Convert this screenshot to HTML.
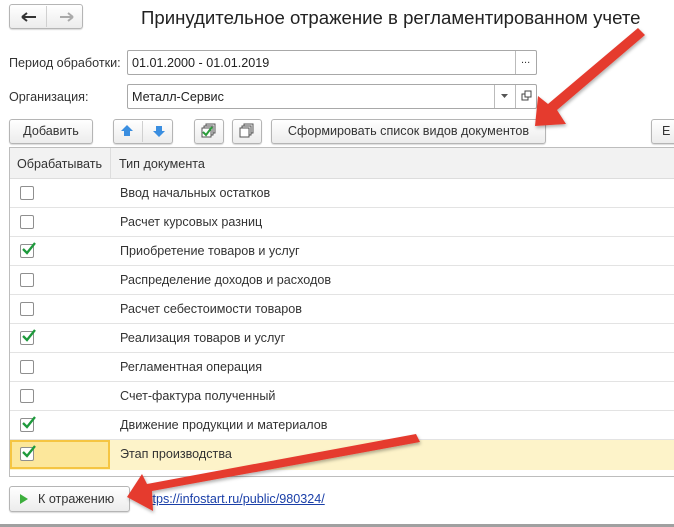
<!DOCTYPE html>
<html><head><meta charset="utf-8"><style>
body{margin:0;width:674px;height:527px;background:#fff;font-family:"Liberation Sans",Arial,sans-serif;font-size:12.6px;color:#333;position:relative;overflow:hidden}
.a{position:absolute}
.btn{position:absolute;border:1px solid #b5b5b5;border-radius:3px;background:linear-gradient(#fff,#ececec);box-shadow:0 1px 1px rgba(0,0,0,.15);box-sizing:border-box;text-align:center;color:#333}
.inp{position:absolute;border:1px solid #a8a8a8;border-radius:2px;box-sizing:border-box;background:#fff}
.row{position:absolute;left:10px;width:664px;height:29px;border-bottom:1px solid #e3e3e3;box-sizing:border-box}
.row span{position:absolute;left:110px;top:7px}
.cb{position:absolute;left:10px;top:7px;width:14px;height:14px;border:1px solid #8f8f8f;border-radius:2px;background:#fff;box-sizing:border-box}
.cb svg{position:absolute;left:0;top:-4px}
</style></head><body>
<div class="btn" style="left:9px;top:4px;width:74px;height:25px"></div>
<div class="a" style="left:46px;top:6px;width:1px;height:21px;background:#d0d0d0"></div>
<svg class="a" style="left:20px;top:10px" width="60" height="14"><path d="M2 7h14M2 7l5-4M2 7l5 4" stroke="#333" stroke-width="2" fill="none"/><path d="M40 7h13M53 7l-5-4M53 7l-5 4" stroke="#aaa" stroke-width="2" fill="none"/></svg>
<div class="a" style="left:141px;top:7px;font-size:18.6px;color:#222">Принудительное отражение в регламентированном учете</div>
<div class="a" style="left:9px;top:56px">Период обработки:</div>
<div class="inp" style="left:127px;top:50px;width:410px;height:25px"><span class="a" style="left:4px;top:5px;color:#222">01.01.2000 - 01.01.2019</span><div class="a" style="left:387px;top:0;width:1px;height:23px;background:#bbb"></div><span class="a" style="left:393px;top:3px;font-size:11px">...</span></div>
<div class="a" style="left:9px;top:90px">Организация:</div>
<div class="inp" style="left:127px;top:84px;width:410px;height:25px"><span class="a" style="left:4px;top:5px;color:#222">Металл-Сервис</span><div class="a" style="left:366px;top:0;width:1px;height:23px;background:#bbb"></div><div class="a" style="left:387px;top:0;width:1px;height:23px;background:#bbb"></div><svg class="a" style="left:373px;top:9px" width="8" height="5"><path d="M0 0h7L3.5 4z" fill="#555"/></svg><svg class="a" style="left:393px;top:5px" width="12" height="12"><rect x="1" y="4" width="6" height="6" fill="none" stroke="#444"/><rect x="4" y="1" width="6" height="6" fill="#fff" stroke="#444"/></svg></div>
<div class="btn" style="left:9px;top:119px;width:84px;height:25px;line-height:23px">Добавить</div>
<div class="btn" style="left:113px;top:119px;width:60px;height:25px"></div>
<div class="a" style="left:142px;top:121px;width:1px;height:21px;background:#d0d0d0"></div>
<svg class="a" style="left:120px;top:123px" width="50" height="16"><path d="M7 2l6 6h-3v5H4V8H1z" fill="#3a8ee0"/><path d="M36 3h6v5h3l-6 6-6-6h3z" fill="#3a8ee0"/></svg>
<div class="btn" style="left:194px;top:119px;width:30px;height:25px"></div>
<svg class="a" style="left:200px;top:122px" width="18" height="18"><rect x="6" y="2" width="9" height="9" fill="#eee" stroke="#555"/><rect x="4" y="4" width="9" height="9" fill="#eee" stroke="#555"/><rect x="2" y="6" width="9" height="9" fill="#fff" stroke="#555"/><path d="M3 10l3 3 6-8" stroke="#2a9d3a" stroke-width="2" fill="none"/></svg>
<div class="btn" style="left:232px;top:119px;width:30px;height:25px"></div>
<svg class="a" style="left:238px;top:122px" width="18" height="18"><rect x="6" y="2" width="9" height="9" fill="#eee" stroke="#555"/><rect x="4" y="4" width="9" height="9" fill="#eee" stroke="#555"/><rect x="2" y="6" width="9" height="9" fill="#fff" stroke="#555"/></svg>
<div class="btn" style="left:271px;top:119px;width:275px;height:25px;line-height:23px">Сформировать список видов документов</div>
<div class="btn" style="left:651px;top:119px;width:40px;height:25px;line-height:23px;text-align:left;padding-left:10px">Е</div>
<div class="a" style="left:9px;top:147px;width:666px;height:330px;border:1px solid #bdbdbd;border-right:none;box-sizing:border-box"></div>
<div class="a" style="left:10px;top:148px;width:664px;height:31px;background:#f2f2f2;border-bottom:1px solid #ddd;box-sizing:border-box"></div>
<div class="a" style="left:110px;top:148px;width:1px;height:31px;background:#ddd"></div>
<div class="a" style="left:17px;top:157px">Обрабатывать</div>
<div class="a" style="left:119px;top:157px">Тип документа</div>
<div class="row" style="top:179px"><div class="cb"></div><span>Ввод начальных остатков</span></div>
<div class="row" style="top:208px"><div class="cb"></div><span>Расчет курсовых разниц</span></div>
<div class="row" style="top:237px"><div class="cb"><svg width="16" height="16"><path d="M2 8l4 4 8-10" stroke="#1e9a3c" stroke-width="2.3" fill="none"/></svg></div><span>Приобретение товаров и услуг</span></div>
<div class="row" style="top:266px"><div class="cb"></div><span>Распределение доходов и расходов</span></div>
<div class="row" style="top:295px"><div class="cb"></div><span>Расчет себестоимости товаров</span></div>
<div class="row" style="top:324px"><div class="cb"><svg width="16" height="16"><path d="M2 8l4 4 8-10" stroke="#1e9a3c" stroke-width="2.3" fill="none"/></svg></div><span>Реализация товаров и услуг</span></div>
<div class="row" style="top:353px"><div class="cb"></div><span>Регламентная операция</span></div>
<div class="row" style="top:382px"><div class="cb"></div><span>Счет-фактура полученный</span></div>
<div class="row" style="top:411px"><div class="cb"><svg width="16" height="16"><path d="M2 8l4 4 8-10" stroke="#1e9a3c" stroke-width="2.3" fill="none"/></svg></div><span>Движение продукции и материалов</span></div>
<div class="row" style="top:440px;background:#fdf3c9;border-bottom:none;height:30px"><div class="a" style="left:0;top:0;width:100px;height:29px;border:2px solid #f5c542;background:#fce79b;box-sizing:border-box"></div><div class="cb"><svg width="16" height="16"><path d="M2 8l4 4 8-10" stroke="#1e9a3c" stroke-width="2.3" fill="none"/></svg></div><span>Этап производства</span></div>
<div class="btn" style="left:9px;top:486px;width:121px;height:26px;line-height:24px;text-align:left;padding-left:28px">К отражению</div>
<svg class="a" style="left:20px;top:494px" width="10" height="10"><path d="M0 0l8 5-8 5z" fill="#3cae3c"/></svg>
<div class="a" style="left:142px;top:492px;color:#1a3fa8;text-decoration:underline">https://infostart.ru/public/980324/</div>
<div class="a" style="left:0;top:524px;width:674px;height:3px;background:#a0a0a0"></div>
<svg class="a" style="left:0;top:0" width="674" height="527">
<defs><filter id="s"><feDropShadow dx="1" dy="2" stdDeviation="1.5" flood-opacity=".3"/></filter></defs>
<g fill="#e53a2f" filter="url(#s)">
<path d="M638 28L645 35L557 110L566 124L535 126L538 96L548 104Z"/>
<path d="M416 434L420 442L152 491L153 511L127 497L142 474L147 484Z"/>
</g></svg>
</body></html>
